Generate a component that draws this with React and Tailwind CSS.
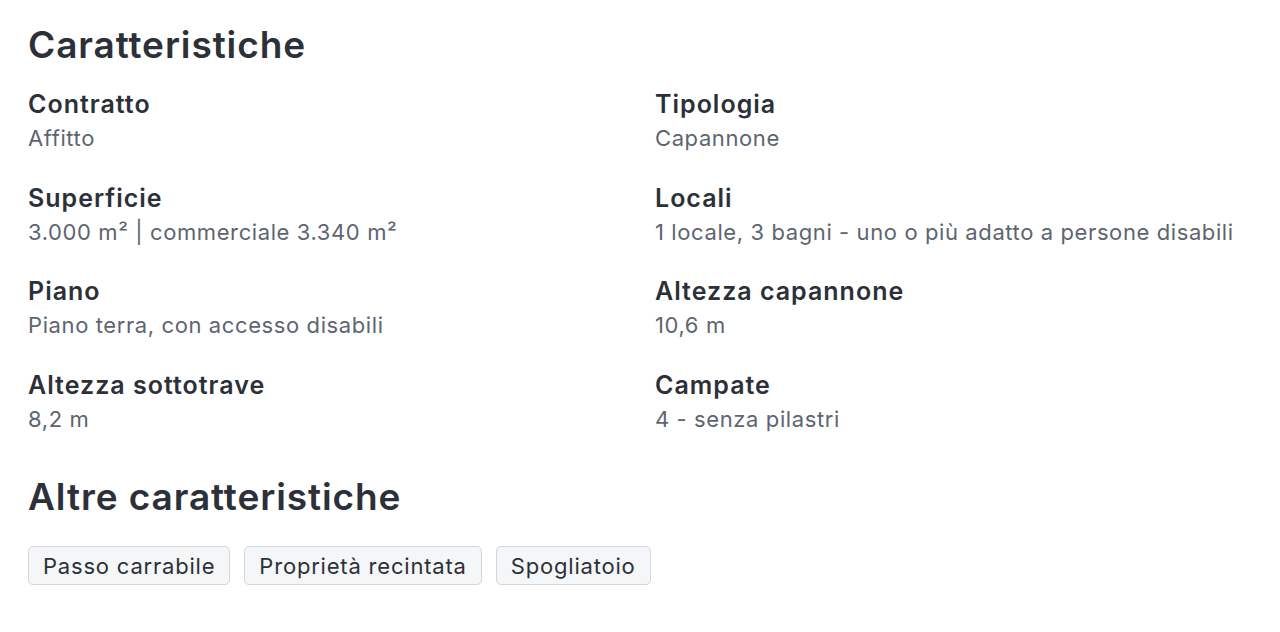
const features = [
  { label: "Contratto", value: "Affitto" },
  { label: "Tipologia", value: "Capannone" },
  { label: "Superficie", value: "3.000 m² | commerciale 3.340 m²" },
  { label: "Locali", value: "1 locale, 3 bagni - uno o più adatto a persone disabili" },
  { label: "Piano", value: "Piano terra, con accesso disabili" },
  { label: "Altezza capannone", value: "10,6 m" },
  { label: "Altezza sottotrave", value: "8,2 m" },
  { label: "Campate", value: "4 - senza pilastri" },
];

const extras = ["Passo carrabile", "Proprietà recintata", "Spogliatoio"];

export default function App() {
  return (
    <main className="min-h-screen bg-white px-[28px] pt-[23px] font-['Inter',sans-serif] text-[#2c3038]">
      <h2 className="text-[37px] font-semibold leading-[44px] tracking-[0.9px]">Caratteristiche</h2>

      <dl className="mt-[21px] grid grid-cols-2 gap-x-[30px] gap-y-[29.5px]">
        {features.map((item) => (
          <div key={item.label}>
            <dt className="text-[25px] font-semibold leading-[32px] tracking-[1px]">{item.label}</dt>
            <dd className="mt-[4px] text-[22px] leading-[28px] tracking-[0.6px] text-[#5e6571]">
              {item.value}
            </dd>
          </div>
        ))}
      </dl>

      <h2 className="mt-[42px] text-[37px] font-semibold leading-[44px] tracking-[0.9px]">
        Altre caratteristiche
      </h2>

      <ul className="mt-[27px] flex flex-wrap gap-[14px]">
        {extras.map((tag) => (
          <li
            key={tag}
            className="rounded-[5px] border border-[#d3d6da] bg-[#f5f6f7] px-[14px] pt-[2px] text-[22px] leading-[35px] tracking-[0.8px]"
          >
            {tag}
          </li>
        ))}
      </ul>
    </main>
  );
}
